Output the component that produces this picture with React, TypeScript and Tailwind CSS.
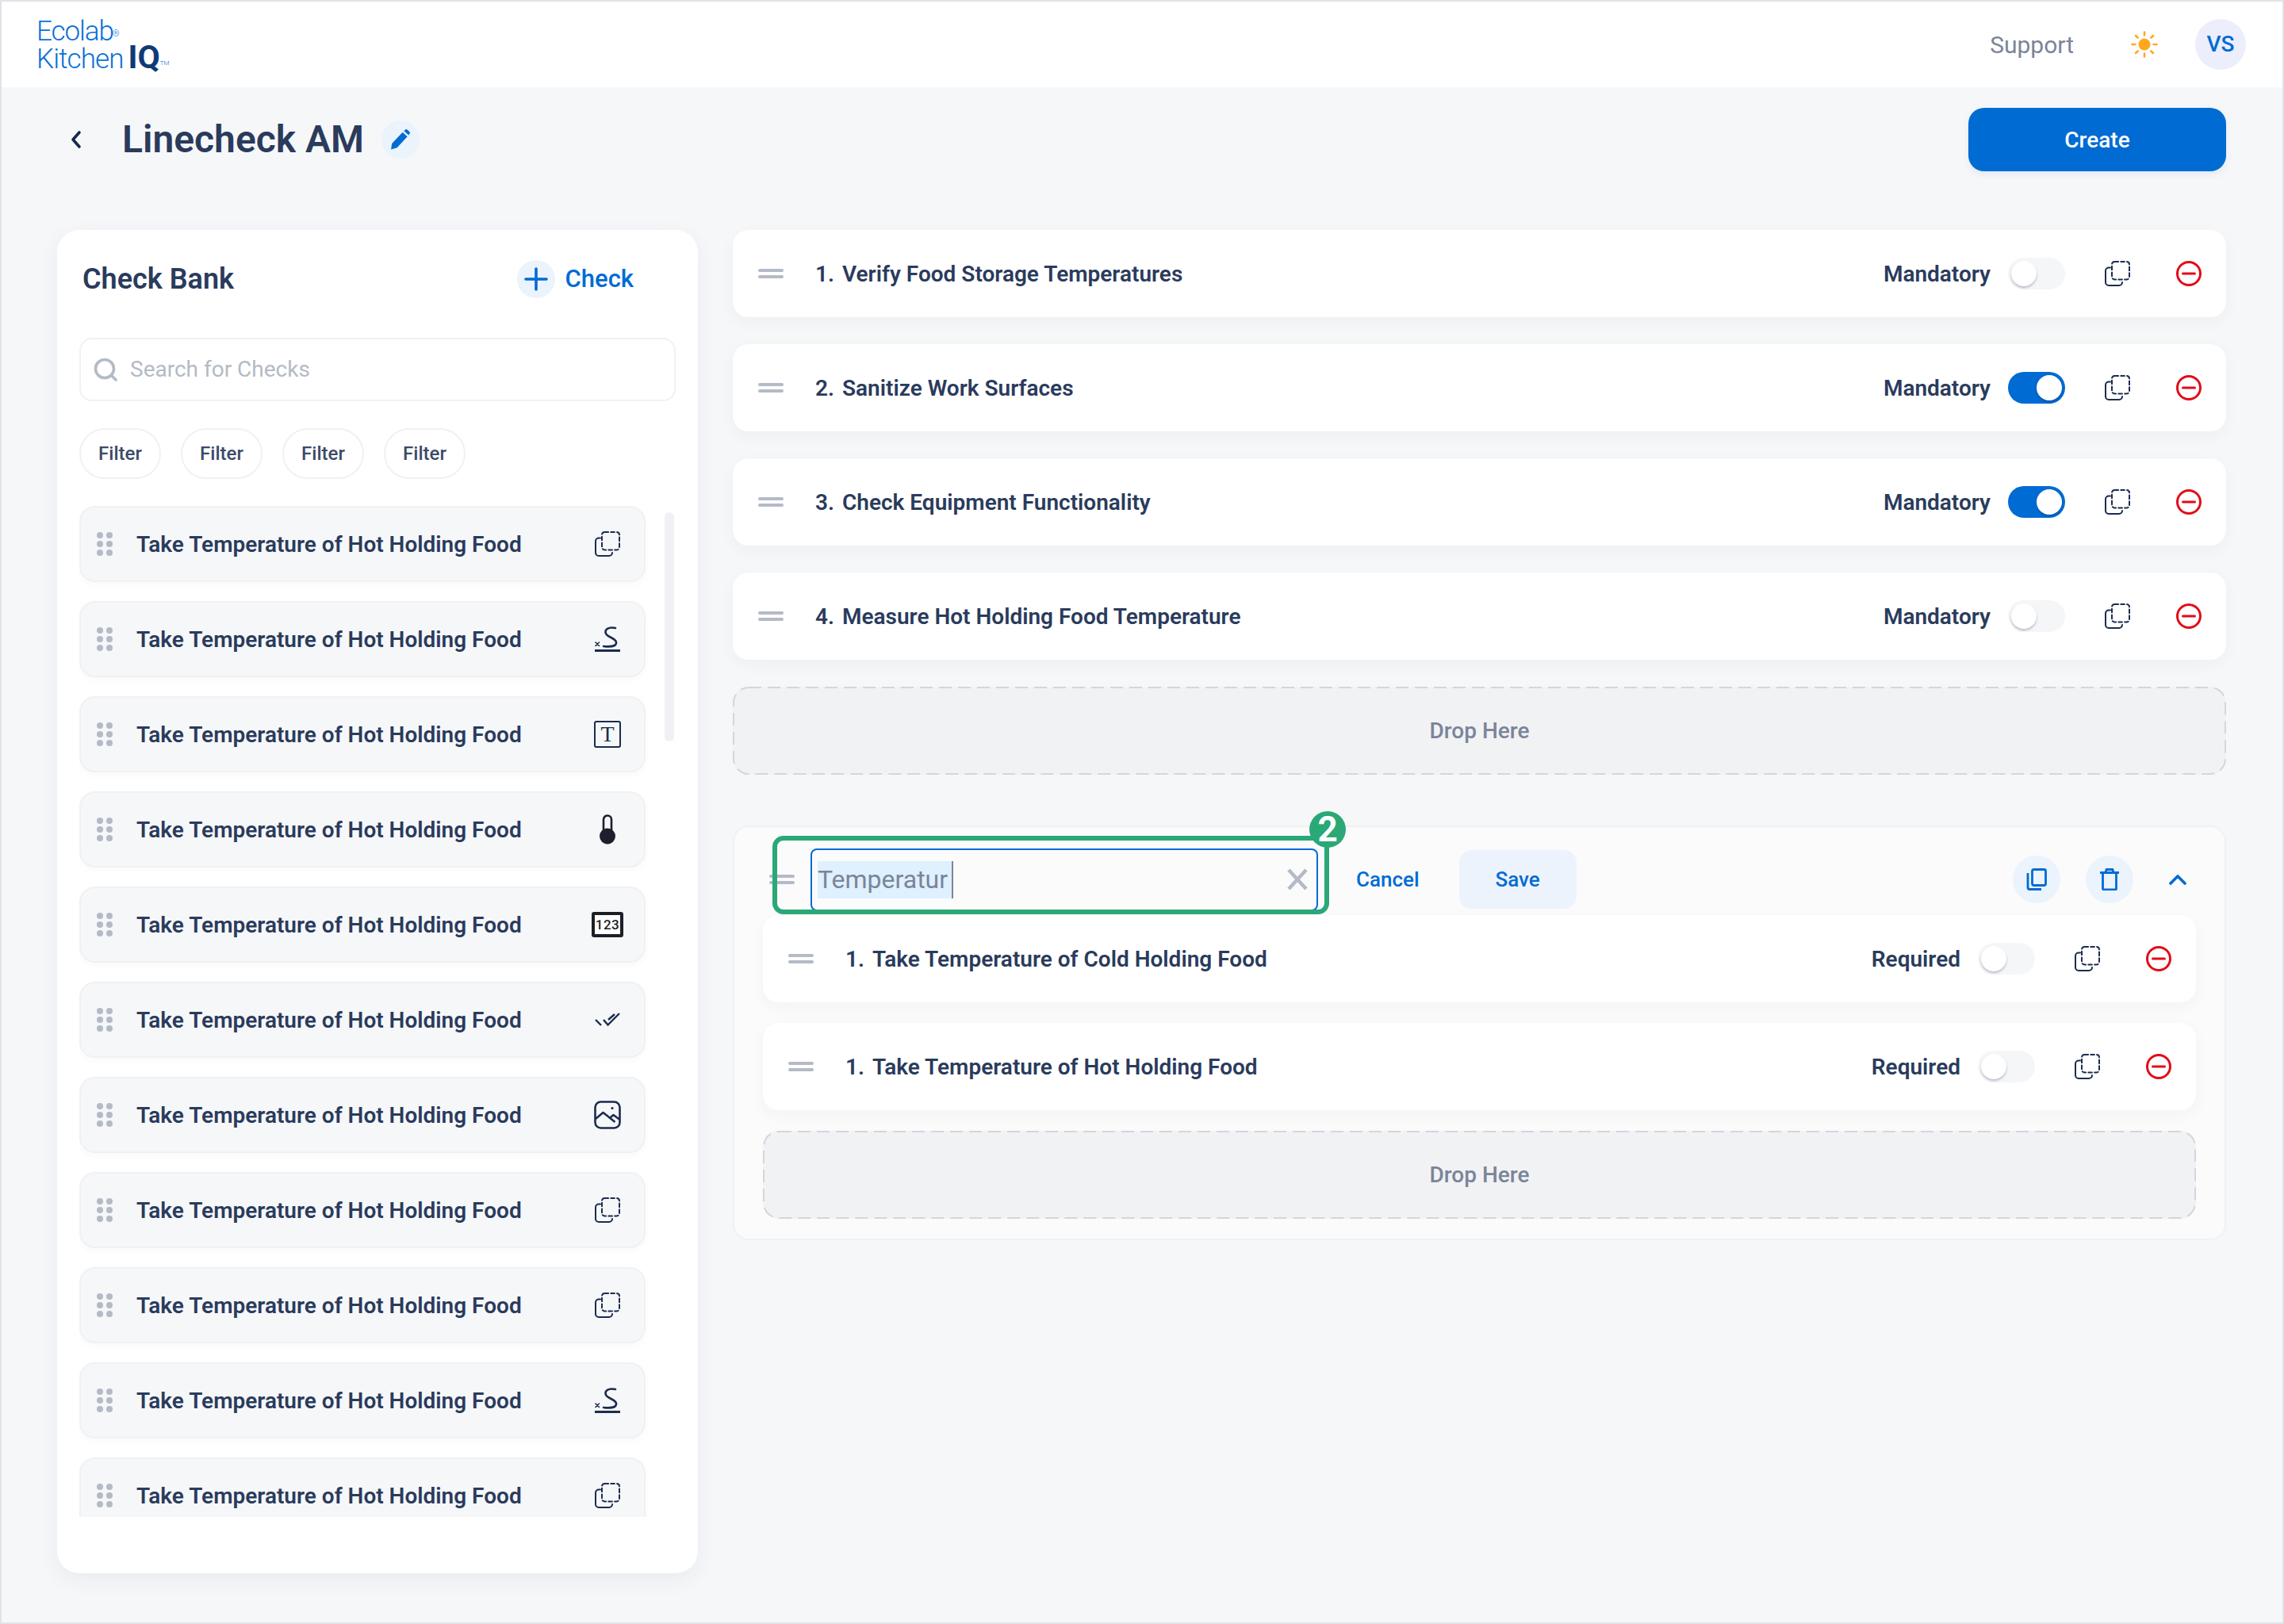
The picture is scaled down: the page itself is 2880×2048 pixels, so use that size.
import React from "react";

const CopyDashed = () => (
  <svg width="32" height="32" viewBox="0 0 32 32" fill="none" stroke="#1b2c4f" strokeWidth="2" strokeLinecap="round">
    <rect x="9" y="1" width="22" height="22.5" rx="3.5" strokeDasharray="4.6 3.2" />
    <path d="M7 8.5H5a4 4 0 0 0-4 4V27a4 4 0 0 0 4 4h13a4 4 0 0 0 4-4" />
  </svg>
);

const Signature = () => (
  <svg width="32" height="32" viewBox="0 0 32 32" fill="none" stroke="#1b2c4f" strokeLinecap="round">
    <path d="M26 2C17 0 12 4 14 9c2 5 14 6 13 12-.6 4-8 5-16 4" strokeWidth="2.6" />
    <path d="M1 20l4.5 4.5M5.5 20L1 24.5" strokeWidth="1.6" />
    <path d="M0 30.5h32" strokeWidth="3" strokeLinecap="butt" />
  </svg>
);

const TextIcon = () => (
  <div className="flex h-[34px] w-[34px] items-center justify-center rounded-[3px] border-2 border-[#1b2c4f] font-['Liberation_Serif',serif] text-[28px] leading-none text-[#1b2c4f]">
    T
  </div>
);

const Thermo = () => (
  <svg width="22" height="38" viewBox="0 0 22 38" fill="none">
    <path d="M6 22V6.5a5 5 0 0 1 10 0V22" stroke="#1d1f2c" strokeWidth="2.6" />
    <circle cx="11" cy="27.5" r="10" fill="#1d1f2c" />
  </svg>
);

const NumberIcon = () => (
  <div className="flex h-[32px] w-[40px] items-center justify-center rounded-[3px] border-[4px] border-[#1d1f24] bg-white text-[17px] leading-none font-medium tracking-[0.5px] text-[#1d1f24]">
    123
  </div>
);

const DoubleCheck = () => (
  <svg width="32" height="18" viewBox="0 0 32 18" fill="none" stroke="#1b2c4f" strokeWidth="2.4">
    <path d="M1 9l7 7M11 9l5.5 6.5L31 1M17 9l8-7" />
  </svg>
);

const ImageIcon = () => (
  <svg width="34" height="36" viewBox="0 0 34 36" fill="none" stroke="#1b2c4f" strokeWidth="2.6" strokeLinejoin="round">
    <rect x="1.5" y="1.5" width="31" height="33" rx="7" />
    <path d="M2 23l9.5-8 15 12M21 21l3.5-3 8 6" />
    <circle cx="23" cy="9.5" r="1.6" fill="#1b2c4f" stroke="none" />
  </svg>
);

const MinusCircle = () => (
  <svg width="32" height="32" viewBox="0 0 32 32" fill="none" stroke="#e30b17" strokeWidth="3">
    <circle cx="16" cy="16" r="14.5" />
    <path d="M8.5 16h15" strokeLinecap="round" />
  </svg>
);

const BarsHandle = () => (
  <div className="flex w-[32px] shrink-0 flex-col gap-[4px]">
    <div className="h-[4px] rounded-full bg-[#b4bac6]" />
    <div className="h-[4px] rounded-full bg-[#b4bac6]" />
  </div>
);

const DotsHandle = () => (
  <div className="grid w-[20px] shrink-0 grid-cols-2 gap-x-[4px] gap-y-[3px]">
    {[0, 1, 2, 3, 4, 5].map((i) => (
      <div key={i} className="h-[8px] w-[8px] rounded-full bg-[#b4bac6]" />
    ))}
  </div>
);

const Toggle = ({ on }: { on?: boolean }) => (
  <div
    className={
      on
        ? "flex h-[40px] w-[72px] items-center justify-end rounded-full bg-[#006bd3] px-[4px]"
        : "flex h-[40px] w-[72px] items-center rounded-full bg-[#f5f6f8] px-[4px]"
    }
  >
    <div className="h-[32px] w-[32px] rounded-full bg-white shadow-[0_2px_3px_rgba(30,40,70,0.28)]" />
  </div>
);

const CheckRow = ({ num, label, on, tag = "Mandatory" }: { num: number; label: string; on?: boolean; tag?: string }) => (
  <div className="flex h-[110px] items-center rounded-[20px] bg-white pr-[31px] pl-[32px] shadow-[0_6px_20px_rgba(40,50,80,0.04)]">
    <BarsHandle />
    <div className="ml-[40px] flex-1 pt-[1px] text-[28px] font-semibold text-[#2a3b5c]">
      <span className="mr-[10px]">{num}.</span>
      {label}
    </div>
    <div className="pt-[1px] text-[28px] font-semibold text-[#2a3b5c]">{tag}</div>
    <div className="ml-[22px]">
      <Toggle on={on} />
    </div>
    <div className="ml-[50px]">
      <CopyDashed />
    </div>
    <div className="ml-[58px]">
      <MinusCircle />
    </div>
  </div>
);

const DropHere = () => (
  <div className="relative flex h-[111px] items-center justify-center rounded-[20px] bg-[#f1f2f4] text-[28px] font-medium text-[#7a8599]">
    <svg className="absolute inset-0 h-full w-full" fill="none">
      <rect
        x="1"
        y="1"
        rx="19"
        className="h-[calc(100%-2px)] w-[calc(100%-2px)]"
        stroke="#d3d6dc"
        strokeWidth="2"
        strokeDasharray="16 8"
      />
    </svg>
    Drop Here
  </div>
);

const bankIcons = [
  <CopyDashed />,
  <Signature />,
  <TextIcon />,
  <Thermo />,
  <NumberIcon />,
  <DoubleCheck />,
  <ImageIcon />,
  <CopyDashed />,
  <CopyDashed />,
  <Signature />,
  <CopyDashed />,
];

export default function App() {
  return (
    <div className="flex h-[2048px] w-[2880px] flex-col border-2 border-[#dfe3e9] bg-[#f6f7f9] font-['Roboto',sans-serif]">
      <header className="flex h-[108px] shrink-0 items-center bg-white pr-[46px] pl-[44px]">
        <div className="mb-[5px] flex flex-col text-[#0a6fd6]">
          <div className="h-[30px] text-[35px] leading-[30px] font-light tracking-[-1.1px]">
            Ecolab<sup className="ml-[-1px] text-[11px]">®</sup>
          </div>
          <div className="mt-[-3px] h-[30px] text-[35px] leading-[30px] font-light tracking-[-0.9px]">
            Kitchen
            <span className="ml-[6px] text-[41px] leading-none font-bold tracking-normal text-[#0f3a78]">IQ</span>
            <sup className="text-[8px] tracking-normal">TM</sup>
          </div>
        </div>
        <div className="ml-auto text-[30px] text-[#7a8599]">Support</div>
        <svg className="ml-[72px]" width="34" height="34" viewBox="0 0 34 34" fill="none" stroke="#ffa81f" strokeWidth="2.6" strokeLinecap="round">
          <circle cx="17" cy="17" r="7.5" fill="#ffa81f" stroke="none" />
          <path d="M17 1.5v4M17 28.5v4M1.5 17h4M28.5 17h4M6 6l2.7 2.7M25.3 25.3L28 28M6 28l2.7-2.7M25.3 8.7L28 6" />
        </svg>
        <div className="ml-[47px] flex h-[64px] w-[64px] items-center justify-center rounded-full bg-[#eceefc] text-[28px] font-medium text-[#006bd3]">
          VS
        </div>
      </header>

      <main className="flex-1 pr-[71px] pl-[70px]">
        <div className="mt-[26px] flex h-[80px] items-center">
          <svg className="ml-[17px]" width="14" height="24" viewBox="0 0 14 24" fill="none" stroke="#13294b" strokeWidth="3.6" strokeLinecap="round" strokeLinejoin="round">
            <path d="M11 3L3 12l8 9" />
          </svg>
          <h1 className="ml-[51px] text-[48px] font-semibold text-[#2a3b5c]">Linecheck AM</h1>
          <div className="ml-[22px] flex h-[48px] w-[48px] items-center justify-center rounded-full bg-[#ebf3fc]">
            <svg width="26" height="26" viewBox="0 0 24 24" fill="#006bd3">
              <path d="M1 23.5l1-7L14.5 3.5l5.5 5L8 21.5zM16 2l1.8-1.6c.6-.5 1.4-.5 2 0l2.8 2.6c.6.6.6 1.4 0 2L21.5 7z" />
            </svg>
          </div>
          <button className="ml-auto h-[80px] w-[325px] rounded-[20px] bg-[#006bd3] pt-[1px] text-[28px] font-medium text-white shadow-[0_4px_10px_rgba(0,80,170,0.08)]">
            Create
          </button>
        </div>

        <div className="mt-[74px] flex items-start gap-[44px]">
          <aside className="flex h-[1694px] w-[808px] shrink-0 flex-col rounded-[28px] bg-white pt-[38px] pl-[28px] shadow-[0_8px_28px_rgba(40,50,80,0.06)]">
            <div className="flex h-[48px] items-center pr-[81px] pl-[4px]">
              <h2 className="flex-1 text-[36px] font-semibold text-[#2a3b5c]">Check Bank</h2>
              <div className="flex h-[48px] w-[48px] items-center justify-center rounded-full bg-[#ebf3fc]">
                <svg width="30" height="30" viewBox="0 0 30 30" stroke="#006bd3" strokeWidth="3.6" strokeLinecap="round">
                  <path d="M15 2v26M2 15h26" />
                </svg>
              </div>
              <span className="ml-[13px] pt-[1px] text-[31px] font-medium text-[#006bd3]">Check</span>
            </div>

            <div className="mt-[50px] mr-[28px] flex h-[80px] items-center rounded-[16px] border-2 border-[#f0f1f4] pl-[16px]">
              <svg width="30" height="30" viewBox="0 0 30 30" fill="none" stroke="#b4bac6" strokeWidth="3.6" strokeLinecap="round">
                <circle cx="14" cy="14" r="11.5" />
                <path d="M23 23l5 5" />
              </svg>
              <span className="ml-[16px] text-[28px] text-[#b4bac6]">Search for Checks</span>
            </div>

            <div className="mt-[34px] flex gap-[25px]">
              {["a", "b", "c", "d"].map((k) => (
                <div
                  key={k}
                  className="flex h-[64px] w-[103px] items-center justify-center rounded-full border-2 border-[#f0f1f4] text-[24px] font-medium text-[#3b4a68]"
                >
                  Filter
                </div>
              ))}
            </div>

            <div className="relative mt-[34px] h-[1275px] overflow-hidden">
              <div className="flex w-[714px] flex-col gap-[24px]">
                {bankIcons.map((icon, i) => (
                  <div
                    key={i}
                    className="flex h-[96px] shrink-0 items-center rounded-[20px] border-2 border-[#f0f1f4] bg-[#f6f7f9] pl-[20px] shadow-[0_3px_8px_rgba(40,50,80,0.03)]"
                  >
                    <DotsHandle />
                    <div className="ml-[30px] flex-1 pt-[1px] text-[28px] font-semibold text-[#2a3b5c]">
                      Take Temperature of Hot Holding Food
                    </div>
                    <div className="mr-[26px] flex w-[40px] items-center justify-center">{icon}</div>
                  </div>
                ))}
              </div>
              <div className="absolute top-[8px] left-[738px] h-[289px] w-[12px] rounded-full bg-[#f0f1f4]" />
            </div>
          </aside>

          <section className="flex flex-1 flex-col">
            <div className="flex flex-col gap-[34px]">
              <CheckRow num={1} label="Verify Food Storage Temperatures" />
              <CheckRow num={2} label="Sanitize Work Surfaces" on />
              <CheckRow num={3} label="Check Equipment Functionality" on />
              <CheckRow num={4} label="Measure Hot Holding Food Temperature" />
              <DropHere />
            </div>

            <div className="relative mt-[64px] rounded-[20px] border-2 border-[#f0f1f4] bg-[#fbfbfc] pr-[36px] pb-[25px] pl-[36px]">
              <div className="flex h-[111px] items-center pt-[21px] pr-[12px]">
                <div className="ml-[8px]">
                  <BarsHandle />
                </div>
                <div className="ml-[20px] flex h-[79px] w-[640px] shrink-0 items-center rounded-[8px] border-2 border-[#006bd3] pr-[10px] pl-[7px]">
                  <span className="border-r-2 border-[#7a8599] bg-[#dff0ff] py-[3px] pr-[5px] text-[32px] leading-[41px] text-[#7a8599]">
                    Temperatur
                  </span>
                  <svg className="ml-auto" width="28" height="28" viewBox="0 0 28 28" stroke="#b4bac6" strokeWidth="4.6">
                    <path d="M3 2l22 24M25 2L3 26" />
                  </svg>
                </div>
                <span className="ml-[48px] text-[26px] font-medium text-[#006bd3]">Cancel</span>
                <button className="ml-[50px] h-[74px] w-[148px] rounded-[16px] bg-[#edf3fc] text-[26px] font-medium text-[#006bd3]">
                  Save
                </button>
                <div className="ml-auto flex h-[60px] w-[60px] items-center justify-center rounded-full bg-[#ebf3fc]">
                  <svg width="26" height="28" viewBox="0 0 26 28" fill="none" stroke="#006bd3" strokeWidth="2.8" strokeLinejoin="round">
                    <rect x="7.5" y="1.5" width="17" height="20" rx="2" />
                    <path d="M2 6v18a2.5 2.5 0 0 0 2.5 2.5H19" />
                  </svg>
                </div>
                <div className="ml-[32px] flex h-[60px] w-[60px] items-center justify-center rounded-full bg-[#ebf3fc]">
                  <svg width="26" height="28" viewBox="0 0 26 28" fill="none" stroke="#006bd3" strokeWidth="2.8" strokeLinejoin="round">
                    <path d="M1 5.5h24M8 5.5L9 1.5h8l1 4M4.5 5.5v20a1.5 1.5 0 0 0 1.5 1.5h14a1.5 1.5 0 0 0 1.5-1.5v-20" />
                  </svg>
                </div>
                <svg className="ml-[45px]" width="22" height="14" viewBox="0 0 22 14" fill="none" stroke="#006bd3" strokeWidth="3.6" strokeLinecap="round" strokeLinejoin="round">
                  <path d="M2 12l9-9 9 9" />
                </svg>
              </div>

              <div className="flex flex-col gap-[26px]">
                <CheckRow num={1} label="Take Temperature of Cold Holding Food" tag="Required" />
                <CheckRow num={1} label="Take Temperature of Hot Holding Food" tag="Required" />
                <DropHere />
              </div>

              {/* green annotation sits over the name field */}
              <div className="absolute top-[11px] left-[48px] h-[99px] w-[702px] rounded-[14px] border-[6px] border-[#2aa876]" />
              <div className="absolute top-[-20px] left-[725px] flex h-[46px] w-[46px] items-center justify-center rounded-full bg-[#2aa876] text-[44px] leading-none font-bold text-white">
                2
              </div>
            </div>
          </section>
        </div>
      </main>
    </div>
  );
}
